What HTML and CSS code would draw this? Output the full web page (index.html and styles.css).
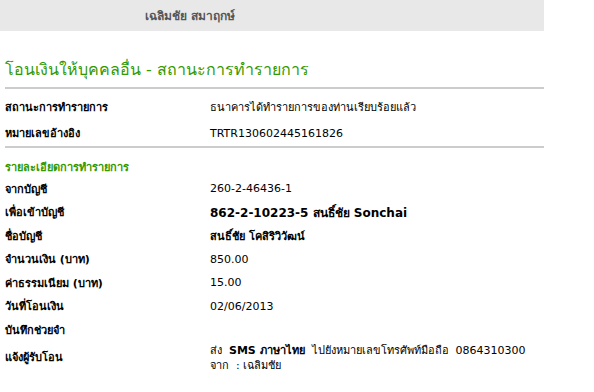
FILE: index.html
```html
<!DOCTYPE html>
<html lang="th">
<head>
    <meta charset="UTF-8">
    <meta name="viewport" content="width=device-width, initial-scale=1.0">
    <title>โอนเงินให้บุคคลอื่น - สถานะการทำรายการ</title>
    <link rel="stylesheet" href="styles.css">
</head>
<body>
    <div class="page">
        <div class="topbar">
            <span class="username">เฉลิมชัย สมาฤกษ์</span>
        </div>

        <div class="content">
            <h1 class="title">โอนเงินให้บุคคลอื่น - สถานะการทำรายการ</h1>

            <table class="info">
                <tr>
                    <td class="label">สถานะการทำรายการ</td>
                    <td class="value">ธนาคารได้ทำรายการของท่านเรียบร้อยแล้ว</td>
                </tr>
                <tr>
                    <td class="label">หมายเลขอ้างอิง</td>
                    <td class="value">TRTR130602445161826</td>
                </tr>
            </table>

            <h2 class="section">รายละเอียดการทำรายการ</h2>

            <table class="info details">
                <tr>
                    <td class="label">จากบัญชี</td>
                    <td class="value">260-2-46436-1</td>
                </tr>
                <tr>
                    <td class="label">เพื่อเข้าบัญชี</td>
                    <td class="value strong">862-2-10223-5 สนธิ์ชัย Sonchai</td>
                </tr>
                <tr>
                    <td class="label">ชื่อบัญชี</td>
                    <td class="value bold">สนธิ์ชัย โคสิริวิวัฒน์</td>
                </tr>
                <tr>
                    <td class="label">จำนวนเงิน (บาท)</td>
                    <td class="value">850.00</td>
                </tr>
                <tr>
                    <td class="label">ค่าธรรมเนียม (บาท)</td>
                    <td class="value">15.00</td>
                </tr>
                <tr>
                    <td class="label">วันที่โอนเงิน</td>
                    <td class="value">02/06/2013</td>
                </tr>
                <tr>
                    <td class="label">บันทึกช่วยจำ</td>
                    <td class="value"></td>
                </tr>
                <tr class="notify">
                    <td class="label">แจ้งผู้รับโอน</td>
                    <td class="value">
                        ส่ง &nbsp;<b>SMS ภาษาไทย</b> &nbsp;ไปยังหมายเลขโทรศัพท์มือถือ &nbsp;0864310300<br>
                        จาก &nbsp;: เฉลิมชัย
                    </td>
                </tr>
            </table>
        </div>
    </div>
</body>
</html>
```
FILE: styles.css
```css
body {
    margin: 0;
    background: #fff;
    font-family: "DejaVu Sans", Verdana, sans-serif;
    font-size: 11px;
    color: #000;
}

.page {
    width: 544px;
}

.topbar {
    height: 31px;
    background: #e8e8e8;
    display: flex;
    align-items: center;
    padding-left: 145px;
}

.username {
    font-size: 12px;
    font-weight: bold;
    color: #555;
}

.content {
    padding-left: 5px;
}

.title {
    margin: 27px 0 0;
    padding-bottom: 5px;
    border-bottom: 2px solid #cccccc;
    font-size: 16px;
    font-weight: normal;
    color: #339900;
    line-height: 24px;
}

.info {
    width: 100%;
    border-collapse: collapse;
    margin-top: 5px;
    border-bottom: 2px solid #cccccc;
}

.info td {
    height: 26px;
    padding: 0;
    vertical-align: middle;
}

.info .label {
    width: 205px;
    font-weight: bold;
}

.details {
    margin-top: 0;
    border-bottom: none;
}

.details td {
    height: 23.5px;
}

.value.strong {
    font-size: 12px;
    font-weight: bold;
}

.value.bold {
    font-weight: bold;
}

.notify td {
    height: 32px;
    padding-top: 0;
    line-height: 15px;
}

.section {
    margin: 0;
    padding-top: 11px;
    font-size: 11px;
    font-weight: bold;
    color: #339900;
    line-height: 18px;
}
```
